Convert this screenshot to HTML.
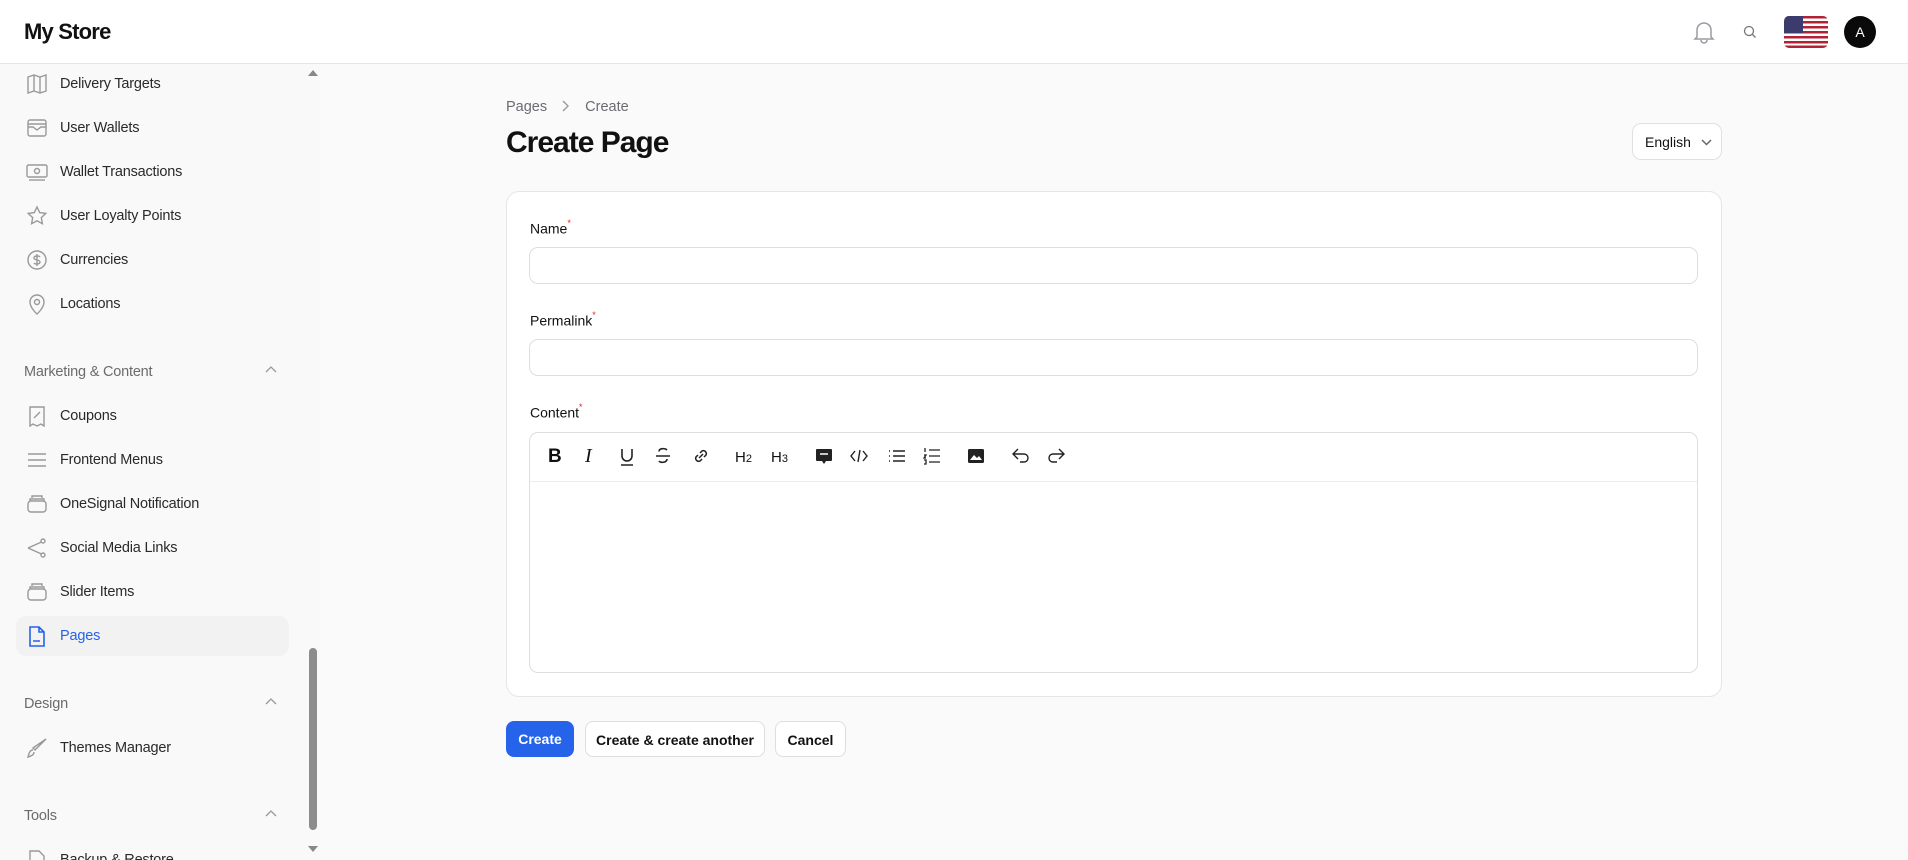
<!DOCTYPE html>
<html><head><meta charset="utf-8"><style>
*{box-sizing:border-box;margin:0;padding:0}
body{width:1908px;height:860px;overflow:hidden;background:#fafafa;font-family:"Liberation Sans",sans-serif;color:#111;position:relative}
.hdr{position:absolute;left:0;top:0;width:1908px;height:64px;background:#fff;border-bottom:1px solid #e5e5e5}
.logo{position:absolute;left:24px;top:19px;font-size:22px;font-weight:bold;letter-spacing:-0.8px}
.side{position:absolute;left:0;top:64px;width:305px;height:796px;background:#f9f9f9;overflow:hidden}
.sb{position:absolute;left:305px;top:64px;width:15px;height:796px;background:#f9f9f9}
.thumb{position:absolute;left:309px;top:648px;width:8px;height:182px;background:#8c8c8c;border-radius:4px}
.it{position:absolute;left:16px;width:273px;height:40px;font-size:14.5px;color:#2a2a2a;letter-spacing:-0.2px}
.it svg{position:absolute;left:10px;top:9px}
.it span{position:absolute;left:44px;top:12px}
.it.act{background:#f2f2f2;border-radius:10px;color:#2563eb}
.grp{position:absolute;left:24px;font-size:14.5px;color:#6b6b6b;letter-spacing:-0.2px}
.chev{position:absolute;left:265px}
.bc{position:absolute;left:506px;top:99px;font-size:14.5px;color:#6b6b72}
h1{position:absolute;left:506px;top:126px;font-size:30px;font-weight:bold;letter-spacing:-1px}
.lang{position:absolute;left:1632px;top:123px;width:90px;height:37px;border:1px solid #e0e0e0;border-radius:9px;background:#fff;font-size:14px;padding:10px 0 0 12px}
.card{position:absolute;left:506px;top:191px;width:1216px;height:506px;background:#fff;border:1px solid #e6e6e6;border-radius:13px}
.lbl{position:absolute;left:530px;font-size:14px;color:#111}
.lbl sup{color:#e02424;font-size:9px;position:relative;top:-2px}
.inp{position:absolute;left:529px;width:1169px;height:37px;border:1px solid #dedede;border-radius:9px;background:#fff}
.ed{position:absolute;left:529px;top:432px;width:1169px;height:241px;border:1px solid #dedede;border-radius:9px;background:#fff}
.tb{position:absolute;left:0;top:0;width:100%;height:49px;border-bottom:1px solid #ececec}
.ic{position:absolute;top:14px}
.btn{position:absolute;top:721px;height:36px;border-radius:8px;font-size:14px;font-weight:bold;text-align:center;padding-top:10px}
</style></head><body>
<div class="hdr"><div class="logo">My Store</div>
<svg style="position:absolute;left:1693px;top:20px" width="22" height="24" viewBox="0 0 22 24" fill="none" stroke="#9a9aa0" stroke-width="1.5"><path d="M4 17V10a7 7 0 0114 0v7l2 2H2z"/><path d="M8 20a3 3 0 006 0"/></svg>
<svg style="position:absolute;left:1743px;top:25px" width="14" height="14" viewBox="0 0 14 14" fill="none" stroke="#777" stroke-width="1.3"><circle cx="6" cy="6" r="4.5"/><path d="M9.5 9.5l3 3"/></svg>
<svg style="position:absolute;left:1784px;top:16px" width="44" height="32" viewBox="0 0 44 32"><defs><clipPath id="c"><rect width="44" height="32" rx="5"/></clipPath></defs><g clip-path="url(#c)"><rect width="44" height="32" fill="#fff"/><g fill="#b22234"><rect y="0" width="44" height="2.5"/><rect y="5" width="44" height="2.5"/><rect y="10" width="44" height="2.5"/><rect y="15" width="44" height="2.5"/><rect y="20" width="44" height="2.5"/><rect y="25" width="44" height="2.5"/><rect y="29.5" width="44" height="2.5"/></g><rect width="19" height="17" fill="#3c3b6e"/></g></svg>
<div style="position:absolute;left:1844px;top:16px;width:32px;height:32px;border-radius:50%;background:#0a0a0a;color:#fff;font-size:14px;text-align:center;line-height:32px">A</div>
</div>
<div class="side">
<div class="it" style="top:0"><svg width="22" height="22" viewBox="0 0 22 22" fill="none" stroke="#999" stroke-width="1.4"><path d="M2 4l6-2 6 2 6-2v16l-6 2-6-2-6 2z M8 2v16 M14 4v16"/></svg><span>Delivery Targets</span></div>
<div class="it" style="top:44px"><svg width="22" height="22" viewBox="0 0 22 22" fill="none" stroke="#999" stroke-width="1.4"><rect x="2" y="3" width="18" height="16" rx="2"/><path d="M2 7h18M2 10h5l4 3 4-3h5"/></svg><span>User Wallets</span></div>
<div class="it" style="top:88px"><svg width="22" height="22" viewBox="0 0 22 22" fill="none" stroke="#999" stroke-width="1.4"><rect x="1" y="4" width="20" height="12" rx="1.5"/><circle cx="11" cy="10" r="2.5"/><path d="M3 19h16"/></svg><span>Wallet Transactions</span></div>
<div class="it" style="top:132px"><svg width="22" height="22" viewBox="0 0 22 22" fill="none" stroke="#999" stroke-width="1.4"><path d="M11 2l2.7 5.6 6.1.8-4.5 4.2 1.1 6.1L11 15.8l-5.4 2.9 1.1-6.1L2.2 8.4l6.1-.8z"/></svg><span>User Loyalty Points</span></div>
<div class="it" style="top:176px"><svg width="22" height="22" viewBox="0 0 22 22" fill="none" stroke="#999" stroke-width="1.4"><circle cx="11" cy="11" r="9"/><path d="M14 8c-1-1.5-6-1.5-6 1s6 1.5 6 4-5 2.5-6 1M11 5v12"/></svg><span>Currencies</span></div>
<div class="it" style="top:220px"><svg width="22" height="22" viewBox="0 0 22 22" fill="none" stroke="#999" stroke-width="1.4"><path d="M11 21s-7-6-7-12a7 7 0 0114 0c0 6-7 12-7 12z"/><circle cx="11" cy="9" r="2.5"/></svg><span>Locations</span></div>
<div class="grp" style="top:300px">Marketing &amp; Content</div>
<svg class="chev" style="top:301px" width="12" height="10" viewBox="0 0 12 10" fill="none" stroke="#999" stroke-width="1.3"><path d="M1 7l5-5 5 5"/></svg>
<div class="it" style="top:332px"><svg width="22" height="22" viewBox="0 0 22 22" fill="none" stroke="#999" stroke-width="1.4"><path d="M4 2h14v19l-3-2-4 2-4-2-3 2z M8 13l6-6"/></svg><span>Coupons</span></div>
<div class="it" style="top:376px"><svg width="22" height="22" viewBox="0 0 22 22" fill="none" stroke="#999" stroke-width="1.4"><path d="M2 5h18M2 11h18M2 17h18"/></svg><span>Frontend Menus</span></div>
<div class="it" style="top:420px"><svg width="22" height="22" viewBox="0 0 22 22" fill="none" stroke="#999" stroke-width="1.4"><rect x="2" y="8" width="18" height="11" rx="3"/><path d="M4 8V6h14v2M6 5V3h10v2"/></svg><span>OneSignal Notification</span></div>
<div class="it" style="top:464px"><svg width="22" height="22" viewBox="0 0 22 22" fill="none" stroke="#999" stroke-width="1.4"><circle cx="17" cy="4" r="2"/><circle cx="17" cy="18" r="2"/><path d="M2 11l13.5-6M2 11l13.5 6"/></svg><span>Social Media Links</span></div>
<div class="it" style="top:508px"><svg width="22" height="22" viewBox="0 0 22 22" fill="none" stroke="#999" stroke-width="1.4"><rect x="2" y="8" width="18" height="11" rx="3"/><path d="M4 8V6h14v2M6 5V3h10v2"/></svg><span>Slider Items</span></div>
<div class="it act" style="top:552px"><svg width="22" height="22" viewBox="0 0 22 22" fill="none" stroke="#2563eb" stroke-width="1.6"><path d="M4 2h9l5 5v14H4z M13 2v5h5 M7 16h7"/></svg><span>Pages</span></div>
<div class="grp" style="top:632px">Design</div>
<svg class="chev" style="top:633px" width="12" height="10" viewBox="0 0 12 10" fill="none" stroke="#999" stroke-width="1.3"><path d="M1 7l5-5 5 5"/></svg>
<div class="it" style="top:664px"><svg width="22" height="22" viewBox="0 0 22 22" fill="none" stroke="#999" stroke-width="1.4"><path d="M20 2L9 13l-2-2zM7 13c-3 0-4 3-5 7 3-1 6-2 6-5"/></svg><span>Themes Manager</span></div>
<div class="grp" style="top:744px">Tools</div>
<svg class="chev" style="top:745px" width="12" height="10" viewBox="0 0 12 10" fill="none" stroke="#999" stroke-width="1.3"><path d="M1 7l5-5 5 5"/></svg>
<div class="it" style="top:776px"><svg width="22" height="22" viewBox="0 0 22 22" fill="none" stroke="#999" stroke-width="1.4"><path d="M4 2h9l5 5v14H4z"/></svg><span>Backup &amp; Restore</span></div>
</div>
<div class="sb"></div>
<svg style="position:absolute;left:308px;top:70px" width="10" height="6"><path d="M0 6L5 0l5 6z" fill="#888"/></svg>
<svg style="position:absolute;left:308px;top:846px" width="10" height="6"><path d="M0 0l5 6 5-6z" fill="#888"/></svg>
<div class="thumb"></div>

<div class="bc">Pages <svg style="margin:0 12px 0 10px;vertical-align:-1px" width="8" height="12" viewBox="0 0 8 12" fill="none" stroke="#999" stroke-width="1.4"><path d="M2 1l5 5-5 5"/></svg> Create</div>
<h1>Create Page</h1>
<div class="lang">English <svg style="position:absolute;left:68px;top:15px" width="11" height="7" viewBox="0 0 11 7" fill="none" stroke="#666" stroke-width="1.5"><path d="M1 1l4.5 4.5L10 1"/></svg></div>
<div class="card"></div>
<div class="lbl" style="top:220px">Name<sup>*</sup></div>
<div class="inp" style="top:247px"></div>
<div class="lbl" style="top:312px">Permalink<sup>*</sup></div>
<div class="inp" style="top:339px"></div>
<div class="lbl" style="top:404px">Content<sup>*</sup></div>
<div class="ed"><div class="tb">
<div class="ic" style="left:18px;font-weight:bold;font-size:19px;top:13px">B</div>
<div class="ic" style="left:55px;font-style:italic;font-family:'Liberation Serif',serif;font-size:20px;top:12px">I</div>
<svg class="ic" style="left:89px;top:15px" width="16" height="18" viewBox="0 0 16 18" fill="none" stroke="#222" stroke-width="1.6"><path d="M3 1v7a5 5 0 0010 0V1M2 17h12"/></svg>
<svg class="ic" style="left:125px;top:14px" width="16" height="18" viewBox="0 0 16 18" fill="none" stroke="#222" stroke-width="1.6"><path d="M12 3c-2-2-8-2-8 1.5M1 9h14M12 12c0 4-7 4-8 2"/></svg>
<svg class="ic" style="left:162px;top:14px" width="18" height="18" viewBox="0 0 18 18" fill="none" stroke="#222" stroke-width="1.5"><path d="M8 6l2-2a3 3 0 014 4l-2 2M10 12l-2 2a3 3 0 01-4-4l2-2M7 11l4-4"/></svg>
<div class="ic" style="left:205px;font-size:15px;top:16px">H<span style="font-size:11px">2</span></div>
<div class="ic" style="left:241px;font-size:15px;top:16px">H<span style="font-size:11px">3</span></div>
<svg class="ic" style="left:285px;top:15px" width="18" height="18" viewBox="0 0 18 18"><path d="M2 1h14a1 1 0 011 1v10a1 1 0 01-1 1h-5l-2 3-2-3H2a1 1 0 01-1-1V2a1 1 0 011-1z" fill="#222"/><path d="M5 6h8" stroke="#fff" stroke-width="1.5"/></svg>
<svg class="ic" style="left:320px;top:15px" width="18" height="16" viewBox="0 0 18 16" fill="none" stroke="#222" stroke-width="1.4"><path d="M5 3L1 8l4 5M13 3l4 5-4 5M10 2L8 14"/></svg>
<svg class="ic" style="left:358px;top:16px" width="18" height="14" viewBox="0 0 18 14" fill="none" stroke="#222" stroke-width="1.4"><path d="M1 2h1M1 7h1M1 12h1M5 2h12M5 7h12M5 12h12"/></svg>
<svg class="ic" style="left:393px;top:14px" width="18" height="18" viewBox="0 0 18 18" fill="none" stroke="#222" stroke-width="1.3"><path d="M2 1v4M1 8h2l-2 3h2M1 13h2v4H1M6 3h11M6 9h11M6 15h11"/></svg>
<svg class="ic" style="left:437px;top:15px" width="18" height="16" viewBox="0 0 18 16"><rect x="1" y="1" width="16" height="14" rx="1.5" fill="#222"/><path d="M3 12l4-5 3 3 2-2 3 4z" fill="#fff"/></svg>
<svg class="ic" style="left:482px;top:15px" width="18" height="16" viewBox="0 0 18 16" fill="none" stroke="#222" stroke-width="1.4"><path d="M6 1L1 6l5 5M1 6h11a4 4 0 010 8H8"/></svg>
<svg class="ic" style="left:517px;top:15px" width="18" height="16" viewBox="0 0 18 16" fill="none" stroke="#222" stroke-width="1.4"><path d="M12 1l5 5-5 5M17 6H6a4 4 0 000 8h4"/></svg>
</div></div>
<div class="btn" style="left:506px;width:68px;background:#2563eb;color:#fff">Create</div>
<div class="btn" style="left:585px;width:180px;background:#fff;border:1px solid #dedede">Create &amp; create another</div>
<div class="btn" style="left:775px;width:71px;background:#fff;border:1px solid #dedede">Cancel</div>
</body></html>
